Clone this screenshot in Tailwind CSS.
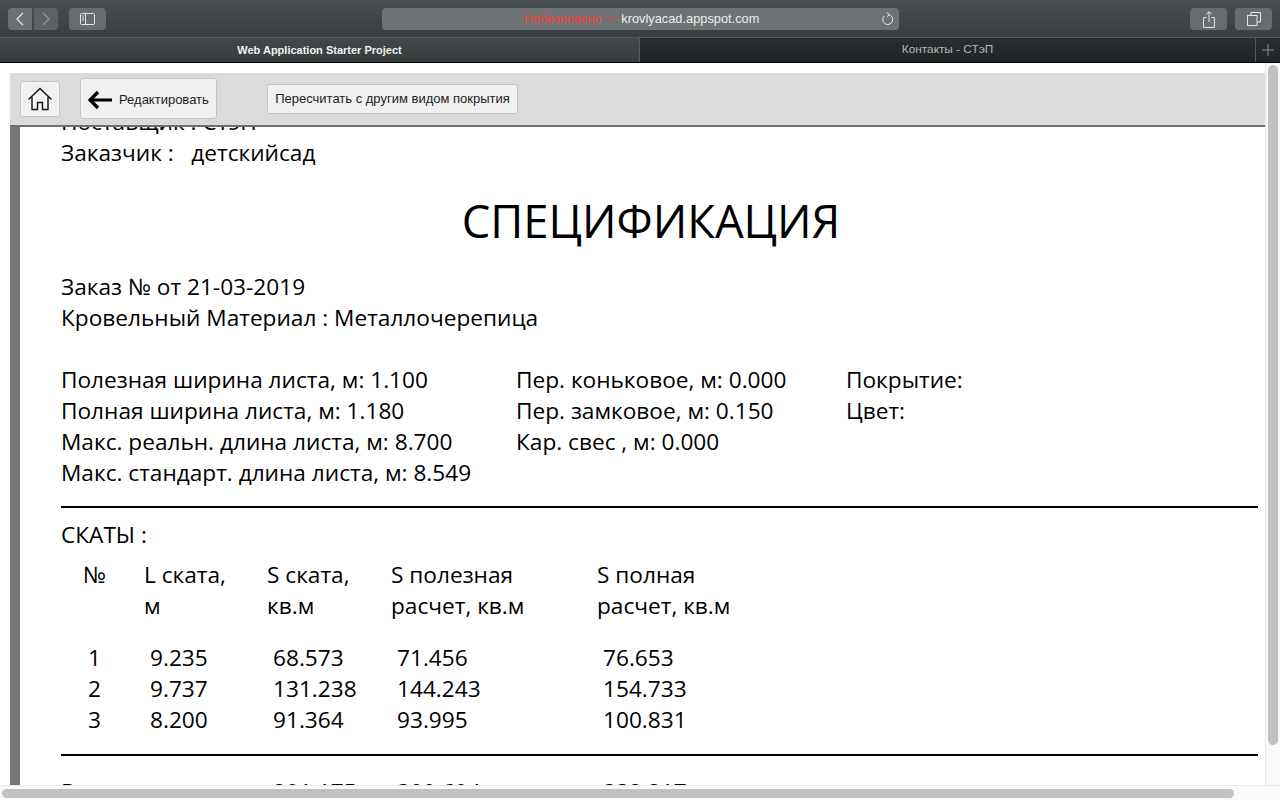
<!DOCTYPE html>
<html lang="ru">
<head>
    <meta charset="UTF-8">
    <title>Спецификация</title>
    <script src="https://cdn.jsdelivr.net/npm/@tailwindcss/browser@4"></script>
</head>
<body class="w-[1280px] h-[800px] overflow-hidden bg-white flex flex-col font-['Liberation_Sans',sans-serif]">
    <!-- safari toolbar -->
    <div class="h-[38px] shrink-0 flex items-center pl-2 pr-[8px] pt-px bg-linear-to-b from-[#4a4f51] to-[#383d40] border-b border-[#54595b]">
        <div class="w-[24px] h-[22px] rounded-l-[4px] bg-[#6b7072] flex items-center justify-center">
            <svg width="10" height="14" viewBox="0 0 10 14" fill="none" stroke="#e4e6e6" stroke-width="1.3"><path d="M8 1 2 7l6 6"/></svg>
        </div>
        <div class="w-[24px] h-[22px] ml-[2px] rounded-r-[4px] bg-[#5d6264] flex items-center justify-center">
            <svg width="10" height="14" viewBox="0 0 10 14" fill="none" stroke="#90959a" stroke-width="1.3"><path d="M2 1l6 6-6 6"/></svg>
        </div>
        <div class="w-[37px] h-[22px] ml-[11px] rounded-[4px] bg-[#676c6e] flex items-center justify-center">
            <svg width="15" height="12" viewBox="0 0 15 12" fill="none" stroke="#e4e6e6"><rect x=".5" y=".5" width="14" height="11" rx="1"/><path d="M5.500 .5v11M2 3h2M2 5h2M2 7h2" /></svg>
        </div>
        <div class="w-[517px] h-[22px] ml-[276px] rounded-[4px] bg-[#6d7274] relative flex items-center justify-center text-[12.800px] pl-[2px]">
            <span class="text-[#ff3b30]">Небезопасно —&nbsp;</span><span class="text-[#eceeee]">krovlyacad.appspot.com</span>
            <svg class="absolute right-[5px] top-[4px]" width="13" height="14" viewBox="0 0 13 14" fill="none" stroke="#e4e6e6"><path d="M7.500 2.600A5 5 0 1 1 3.200 4"/><path d="M6 .5 8.500 2.600 6 4.700" /></svg>
        </div>
        <div class="w-[37px] h-[22px] ml-auto rounded-[4px] bg-[#676c6e] flex items-center justify-center">
            <svg width="12" height="17" viewBox="0 0 12 17" fill="none" stroke="#e4e6e6"><path d="M3.500 6.500h-2.900v9.900h10.800V6.500H8.500M6 11V.8M3.500 3 6 .8 8.500 3"/></svg>
        </div>
        <div class="w-[37px] h-[22px] ml-[8px] rounded-[4px] bg-[#676c6e] flex items-center justify-center">
            <svg width="14" height="14" viewBox="0 0 14 14" fill="none" stroke="#e4e6e6"><path d="M4 3.500V.5h9.500v9.500H10"/><rect x=".5" y="3.500" width="9.500" height="10"/></svg>
        </div>
    </div>

    <!-- tabs -->
    <div class="h-[25px] shrink-0 flex items-stretch text-[11px] border-b border-black">
        <div class="w-[639px] flex items-center justify-center font-bold text-[#f0f1f1] bg-linear-to-b from-[#43484a] to-[#373c3f]">Web Application Starter Project</div>
        <div class="w-[616px] flex items-center justify-center text-[11.800px] text-[#b5b8b9] border-l border-[#555a5c] bg-linear-to-b from-[#2a2e31] to-[#212427]">Контакты - СТэП</div>
        <div class="flex-1 flex items-center justify-center border-l border-[#555a5c] bg-linear-to-b from-[#2a2e31] to-[#212427]">
            <svg width="12" height="12" viewBox="0 0 12 12" stroke="#8a8e90"><path d="M6 0v12M0 6h12"/></svg>
        </div>
    </div>

    <!-- page viewport -->
    <div class="relative flex-1 min-h-0 flex flex-col">
        <div class="flex-1 min-h-0 flex">
            <div class="relative flex-1 min-w-0 overflow-hidden">
                <!-- fixed header over the page -->
                <div class="absolute left-[10px] top-[10px] right-0 h-[54px] z-10 bg-[#dbdbdb] border-b-2 border-[#6f6f6f] flex items-center text-[13px] text-[#222]">
                    <button class="w-[40px] h-[36px] ml-[10px] bg-[#f1f1f1] border border-[#c4c4c4] rounded-[3px] flex items-center justify-center">
                        <svg width="26" height="26" viewBox="0 0 26 26" fill="none" stroke="#111" stroke-width="1.4"><path d="M1.500 13.500 13 2.500l11.500 11M5 11v12.500h5.500v-7h5v7H21V11"/></svg>
                    </button>
                    <button class="w-[137px] h-[41px] -mt-px ml-[20px] bg-[#f1f1f1] border border-[#c4c4c4] rounded-[3px] flex items-center pl-[6px]">
                        <svg class="mt-[2px]" width="26" height="20" viewBox="0 0 26 20" fill="none" stroke="#000" stroke-width="3.200"><path d="M25 10H3M11 2l-8 8 8 8"/></svg>
                        <span class="ml-[6px] mt-[2px]">Редактировать</span>
                    </button>
                    <button class="w-[251px] h-[30px] ml-[50px] bg-[#f1f1f1] border border-[#c4c4c4] rounded-[3px]">Пересчитать с другим видом покрытия</button>
                </div>

                <!-- sheet -->
                <div class="ml-[10px] mt-[10px] h-full border-l-[10px] border-[#777] pl-[41px] pt-[33px] text-[22.650px] leading-[31px] text-black font-['Open_Sans',sans-serif]">
                    <p>Поставщик : СТэП</p>
                    <p class="whitespace-pre">Заказчик :   детскийсад</p>
                    <h1 class="w-[1180px] mt-[20px] mb-[19px] text-center text-[45.400px] leading-[64px] text-black">СПЕЦИФИКАЦИЯ</h1>
                    <p>Заказ № от 21-03-2019</p>
                    <p>Кровельный Материал : Металлочерепица</p>
                    <div class="mt-[31px] grid grid-cols-[455px_330px_1fr]">
                        <div>
                            <p>Полезная ширина листа, м: 1.100</p>
                            <p>Полная ширина листа, м: 1.180</p>
                            <p>Макс. реальн. длина листа, м: 8.700</p>
                            <p>Макс. стандарт. длина листа, м: 8.549</p>
                        </div>
                        <div>
                            <p>Пер. коньковое, м: 0.000</p>
                            <p>Пер. замковое, м: 0.150</p>
                            <p>Кар. свес , м: 0.000</p>
                        </div>
                        <div>
                            <p>Покрытие:</p>
                            <p>Цвет:</p>
                        </div>
                    </div>
                    <div class="w-[1197px] h-[2px] mt-[18px] bg-black"></div>
                    <p class="mt-[11px]">СКАТЫ :</p>
                    <div class="mt-[9px] grid grid-cols-[61px_123px_124px_206px_1fr] w-[800px] pl-[22px]">
                        <span>№</span><span>L ската,<br>м</span><span>S ската,<br>кв.м</span><span>S полезная<br>расчет, кв.м</span><span>S полная<br>расчет, кв.м</span>
                    </div>
                    <div class="mt-[21px] grid grid-cols-[61px_123px_124px_206px_1fr] w-[800px] pl-[27px]">
                        <span>1</span><span class="pl-px">9.235</span><span class="pl-px">68.573</span><span class="pl-px">71.456</span><span class="pl-px">76.653</span>
                        <span>2</span><span class="pl-px">9.737</span><span class="pl-px">131.238</span><span class="pl-px">144.243</span><span class="pl-px">154.733</span>
                        <span>3</span><span class="pl-px">8.200</span><span class="pl-px">91.364</span><span class="pl-px">93.995</span><span class="pl-px">100.831</span>
                    </div>
                    <div class="w-[1197px] h-[2px] mt-[19px] bg-black"></div>
                    <div class="mt-[20px] grid grid-cols-[212px_124px_206px_1fr] w-[800px]">
                        <span>Всего :</span><span>291.175</span><span>309.694</span><span>332.217</span>
                    </div>
                </div>
            </div>
            <!-- vertical scrollbar -->
            <div class="w-[15px] shrink-0 bg-[#fafafa] border-l border-[#e8e8e8] pt-[2px] pl-[2px]">
                <div class="w-[10px] h-[680px] rounded-full bg-[#c1c1c1]"></div>
            </div>
        </div>
        <!-- horizontal scrollbar -->
        <div class="h-[15px] shrink-0 bg-[#fafafa] border-t border-[#e8e8e8] pt-[3px] pl-[2px]">
            <div class="w-[1232px] h-[9px] rounded-full bg-[#c1c1c1]"></div>
        </div>
    </div>
</body>
</html>
